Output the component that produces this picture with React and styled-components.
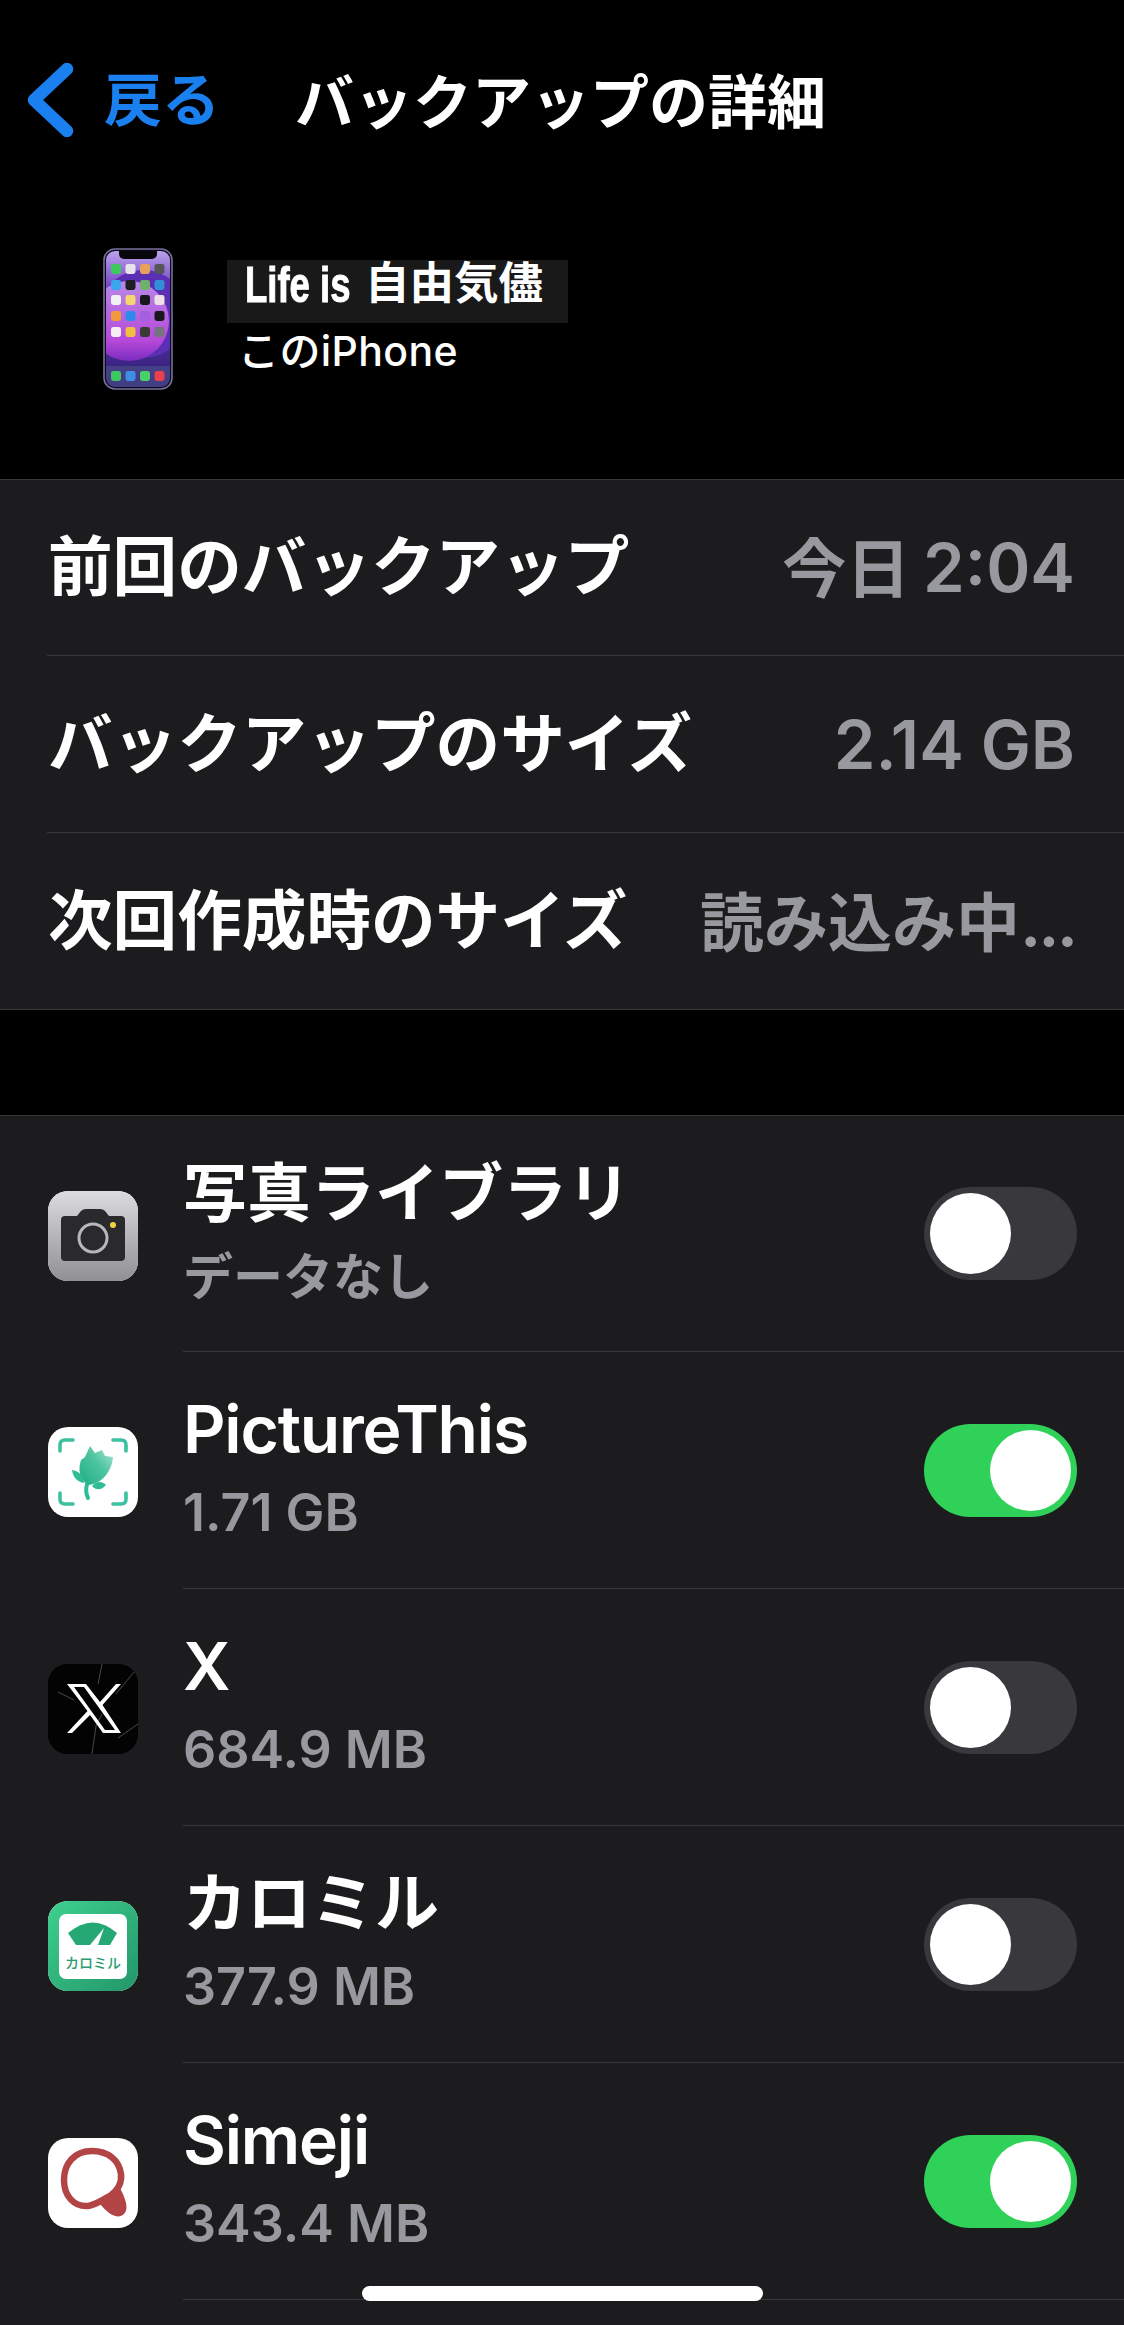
import styled, { createGlobalStyle } from "styled-components";

const GlobalStyle = createGlobalStyle`
  html, body {
    margin: 0;
    padding: 0;
    background: #000;
  }
  * {
    box-sizing: border-box;
  }
`;

const Page = styled.div`
  position: relative;
  width: 1124px;
  height: 2325px;
  overflow: hidden;
  display: flex;
  flex-direction: column;
  background: #000;
  color: #fff;
  font-family: Inter, "Noto Sans CJK JP", sans-serif;
`;

const Header = styled.header`
  height: 200px;
  display: flex;
  align-items: center;
  padding-left: 27px;
`;

const BackLink = styled.div`
  display: flex;
  align-items: center;
  width: 268px;
  gap: 30px;
  color: #1a80f0;
  font-size: 58px;
  font-weight: 600;
  line-height: 1;
`;

const Title = styled.h1`
  margin: 5px 0 0;
  font-size: 59px;
  font-weight: 700;
  line-height: 1;
`;

const Device = styled.div`
  height: 279px;
  display: flex;
  padding: 48px 0 0 103px;
  gap: 54px;
`;

const DeviceText = styled.div`
  display: flex;
  flex-direction: column;
  align-items: flex-start;
  padding-top: 12px;
`;

const DeviceName = styled.div`
  display: flex;
  width: 341px;
  height: 63px;
  padding-left: 18px;
  background: #19191a;
  font-size: 44.5px;
  font-weight: 700;
  line-height: 46px;
  white-space: nowrap;
`;

const DeviceNameLatin = styled.span`
  display: inline-block;
  width: 120px;
  font-family: "Liberation Sans", sans-serif;
  font-size: 50px;
  line-height: 50px;
  -webkit-text-stroke: 1px #fff;
  transform: scaleX(0.73);
  transform-origin: left center;
`;

const DeviceKind = styled.div`
  margin-top: 3px;
  padding-left: 11px;
  font-size: 41px;
  font-weight: 500;
  line-height: 50px;
  letter-spacing: 0.4px;
`;

const Section = styled.section`
  background: #1c1c1e;
  border-top: 1px solid #38383a;
  border-bottom: 1px solid #38383a;
`;

const AppSection = styled(Section)`
  flex: 1;
  margin-top: 105px;
  border-bottom: none;
`;

const InfoRow = styled.div`
  height: 177px;
  margin-left: 47px;
  padding-left: 1px;
  padding-right: 49px;
  display: flex;
  align-items: center;
  justify-content: space-between;
  border-bottom: 1px solid #38383a;
  font-size: 64.6px;
  font-weight: 600;
  line-height: 1;

  &:first-child {
    height: 176px;
  }

  &:last-child {
    height: 176px;
    border-bottom: none;
  }
`;

const InfoValue = styled.span`
  color: #98989f;
  font-size: 67px;
`;

const Cjk = styled.span`
  font-size: 64px;
`;

const TimeDate = styled(Cjk)`
  margin-right: -4px;
`;

const Dots = styled.span`
  letter-spacing: -3px;
`;

const AppRow = styled.div`
  height: 237px;
  display: flex;
  align-items: center;
  padding-left: 48px;

  &:first-child {
    height: 236px;
  }
`;

const IconSlot = styled.div`
  width: 90px;
  height: 90px;
  flex: none;
  margin-top: 3px;
  border-radius: 20px;
  overflow: hidden;
  background: ${(props) => props.$bg || "#fff"};

  svg {
    display: block;
    width: 90px;
    height: 90px;
  }
`;

const AppBody = styled.div`
  flex: 1;
  height: 100%;
  margin-left: 45px;
  padding-right: 47px;
  display: flex;
  align-items: center;
  justify-content: space-between;
  border-bottom: 1px solid #38383a;
`;

const AppText = styled.div`
  display: flex;
  flex-direction: column;
  padding-bottom: 5px;
`;

const AppName = styled.div`
  font-size: ${(props) => (props.$cjk ? "64px" : "66px")};
  font-weight: 600;
  line-height: 80px;
  letter-spacing: ${(props) => (props.$cjk ? "0" : "-1.2px")};
`;

const AppSize = styled.div`
  margin-top: 11px;
  color: #98989f;
  font-size: ${(props) => (props.$cjk ? "50px" : "52px")};
  font-weight: 600;
  line-height: 66px;
`;

const Toggle = styled.div`
  width: 153px;
  height: 93px;
  flex: none;
  padding: 6px;
  display: flex;
  justify-content: ${(props) => (props.$on ? "flex-end" : "flex-start")};
  border-radius: 47px;
  background: ${(props) => (props.$on ? "#30d158" : "#39393d")};
`;

const Knob = styled.span`
  width: 81px;
  height: 81px;
  border-radius: 50%;
  background: #fff;
`;

const HomeIndicator = styled.div`
  position: absolute;
  left: 362px;
  top: 2286px;
  width: 401px;
  height: 15px;
  border-radius: 8px;
  background: #fff;
`;

const PhoneSvg = styled.svg`
  filter: blur(0.4px);
`;

const BackChevron = () => (
  <svg width="47" height="74" viewBox="0 0 47 74" fill="none">
    <path
      d="M40 6 L7 37 L40 68"
      stroke="#1a80f0"
      strokeWidth="12.5"
      strokeLinecap="round"
      strokeLinejoin="round"
    />
  </svg>
);

const HOME_APPS = [
  ["#3ec95f", "#e8e4ea", "#e9a05c", "#55555a"],
  ["#3aa6ee", "#1d1d22", "#6fb06a", "#2f8fd8"],
  ["#f4f1f6", "#f4d66e", "#17171c", "#f0dfe4"],
  ["#f09a3c", "#2b8cee", "#a35fe0", "#17171c"],
  ["#f6eef2", "#f2c040", "#3a3a34", "#74747c"],
];

const DOCK_APPS = ["#3ec95f", "#3f8ee6", "#4ccf68", "#e8404f"];
const COLS = [13, 27.5, 42, 56.5];
const ROWS = [21, 37, 52, 68, 84];

const PhoneThumb = () => (
  <PhoneSvg width="70" height="142" viewBox="0 0 70 142">
    <defs>
      <linearGradient id="wall" x1="0" y1="0" x2="0" y2="1">
        <stop offset="0" stopColor="#b9a2ea" />
        <stop offset="0.25" stopColor="#7a48c8" />
        <stop offset="1" stopColor="#2b1a70" />
      </linearGradient>
      <linearGradient id="disc" x1="0" y1="0" x2="0" y2="1">
        <stop offset="0" stopColor="#b78ae8" />
        <stop offset="0.75" stopColor="#b648d8" />
        <stop offset="1" stopColor="#7a2cc0" />
      </linearGradient>
      <clipPath id="screen">
        <rect x="3" y="3" width="64" height="136" rx="9" />
      </clipPath>
    </defs>
    <rect x="1" y="1" width="68" height="140" rx="11" fill="#0c0a18" stroke="#77709c" strokeWidth="1.6" />
    <g clipPath="url(#screen)">
      <rect x="3" y="3" width="64" height="136" fill="url(#wall)" />
      <circle cx="40" cy="66" r="44" fill="#5a2fb4" />
      <circle cx="26" cy="73" r="40" fill="url(#disc)" />
      <rect x="3" y="118" width="64" height="21" fill="#4a4a88" opacity="0.75" />
      <path d="M16 3 h38 v3 a5 5 0 0 1 -5 5 h-28 a5 5 0 0 1 -5 -5 z" fill="#07070c" />
    </g>
    {HOME_APPS.map((row, r) =>
      row.map((color, c) => (
        <rect key={`${r}-${c}`} x={COLS[c] - 5} y={ROWS[r] - 5} width="10" height="10" rx="2.4" fill={color} />
      ))
    )}
    {DOCK_APPS.map((color, c) => (
      <rect key={color + c} x={COLS[c] - 5} y="123" width="10" height="10" rx="2.4" fill={color} />
    ))}
  </PhoneSvg>
);

const CameraIcon = () => (
  <svg viewBox="0 0 90 90">
    <defs>
      <linearGradient id="cam" x1="0" y1="0" x2="0" y2="1">
        <stop offset="0" stopColor="#dcdce0" />
        <stop offset="1" stopColor="#8f8f94" />
      </linearGradient>
    </defs>
    <rect width="90" height="90" fill="url(#cam)" />
    <path
      d="M17 25 h12 l4 -5 q2 -2 5 -2 h14 q3 0 5 2 l4 5 h12 q4 0 4 4 v37 q0 4 -4 4 h-56 q-4 0 -4 -4 v-37 q0 -4 4 -4 z"
      fill="#2a2a2d"
    />
    <circle cx="45" cy="47" r="14" fill="none" stroke="#b8b8bc" strokeWidth="3" />
    <circle cx="65" cy="34" r="3" fill="#f4d23e" />
  </svg>
);

const PictureThisIcon = () => (
  <svg viewBox="0 0 90 90">
    <defs>
      <linearGradient id="petal" x1="0" y1="1" x2="1" y2="0">
        <stop offset="0" stopColor="#1fae84" />
        <stop offset="0.55" stopColor="#4cc49f" />
        <stop offset="1" stopColor="#b4e8d6" />
      </linearGradient>
    </defs>
    <g fill="none" stroke="#3cc0a0" strokeWidth="3.6" strokeLinecap="round" strokeLinejoin="round">
      <path d="M12 24 v-6 q0 -5 5 -5 h8" />
      <path d="M65 13 h8 q5 0 5 5 v6" />
      <path d="M12 66 v6 q0 5 5 5 h8" />
      <path d="M65 77 h8 q5 0 5 -5 v-6" />
    </g>
    <path d="M39 57 q-2 8 1 14" fill="none" stroke="#2fbd98" strokeWidth="4" strokeLinecap="round" />
    <path d="M40 58 C31 52 30 42 33 33 L37 30 L42 19 L47 26 L54 23 L57 29 L65 30 C64 44 54 57 40 58 Z" fill="url(#petal)" />
    <path d="M36 56 C29 55 25 50 24 43 C31 44 36 49 36 56 Z" fill="#2fbd98" />
    <path d="M44 59 C48 54 54 54 58 58 C54 63 48 64 44 59 Z" fill="#2fbd98" />
  </svg>
);

const XIcon = () => (
  <svg viewBox="0 0 90 90">
    <rect width="90" height="90" fill="#030303" />
    <g stroke="#5c5c5c" strokeWidth="0.8" fill="none">
      <path d="M54 0 L50 20" />
      <path d="M44 90 L48 62 L54 50" />
      <path d="M10 28 L26 36" />
      <path d="M70 74 L90 60" />
      <path d="M68 30 L86 8" />
    </g>
    <path
      fillRule="evenodd"
      fill="#fff"
      d="M19 20 H38 L52 38 L68 20 H73 L54.5 41 L73 69 H55 L42 51 L24 69 H19 L39.5 47 Z M26 23 L57 66 H67 L36 23 Z"
    />
  </svg>
);

const CaloryIcon = () => (
  <svg viewBox="0 0 90 90">
    <defs>
      <linearGradient id="calo" x1="0" y1="0" x2="1" y2="1">
        <stop offset="0" stopColor="#3ed08f" />
        <stop offset="1" stopColor="#23966a" />
      </linearGradient>
    </defs>
    <rect width="90" height="90" fill="url(#calo)" />
    <rect x="11" y="13" width="68" height="65" rx="7" fill="#fff" />
    <path d="M20 32 Q45 11 69 32 L62 44 H28 Z" fill="#25a873" />
    <path d="M42 44 L56 27 L50 44 Z" fill="#fff" />
    <text
      x="45"
      y="67"
      textAnchor="middle"
      fontFamily="'Noto Sans CJK JP', sans-serif"
      fontSize="14"
      fontWeight="500"
      fill="#2a9a70"
    >
      カロミル
    </text>
  </svg>
);

const SimejiIcon = () => (
  <svg viewBox="0 0 90 90">
    <path
      d="M44 13 C26 13 16 26 16 42 C16 58 26 69 40 68 C48 67 54 62 62 58 C70 52 74 44 73 36 C71 22 60 13 44 13 Z"
      fill="none"
      stroke="#b24446"
      strokeWidth="6.5"
      strokeLinejoin="round"
    />
    <path d="M56 60 C62 57 68 54 72 50 C76 58 82 70 76 76 C70 82 60 76 52 66 Z" fill="#b24446" />
  </svg>
);

const INFO = [
  { label: "前回のバックアップ", value: <><TimeDate>今日</TimeDate> 2:04</> },
  { label: "バックアップのサイズ", value: "2.14 GB" },
  { label: "次回作成時のサイズ", value: <><Cjk>読み込み中</Cjk><Dots>...</Dots></> },
];

const APPS = [
  { name: "写真ライブラリ", cjk: true, size: "データなし", sizeCjk: true, icon: <CameraIcon />, on: false },
  { name: "PictureThis", size: "1.71 GB", icon: <PictureThisIcon />, on: true },
  { name: "X", size: "684.9 MB", icon: <XIcon />, on: false, bg: "#030303" },
  { name: "カロミル", cjk: true, size: "377.9 MB", icon: <CaloryIcon />, on: false },
  { name: "Simeji", size: "343.4 MB", icon: <SimejiIcon />, on: true },
];

const App = () => {
  return (
    <Page>
      <GlobalStyle />
      <Header>
        <BackLink>
          <BackChevron />
          戻る
        </BackLink>
        <Title>バックアップの詳細</Title>
      </Header>
      <Device>
        <PhoneThumb />
        <DeviceText>
          <DeviceName>
            <DeviceNameLatin>Life is</DeviceNameLatin>
            自由気儘
          </DeviceName>
          <DeviceKind>このiPhone</DeviceKind>
        </DeviceText>
      </Device>
      <Section>
        {INFO.map((row) => (
          <InfoRow key={row.label}>
            {row.label}
            <InfoValue>{row.value}</InfoValue>
          </InfoRow>
        ))}
      </Section>
      <AppSection>
        {APPS.map((app) => (
          <AppRow key={app.name}>
            <IconSlot $bg={app.bg}>{app.icon}</IconSlot>
            <AppBody>
              <AppText>
                <AppName $cjk={app.cjk}>{app.name}</AppName>
                <AppSize $cjk={app.sizeCjk}>{app.size}</AppSize>
              </AppText>
              <Toggle $on={app.on}>
                <Knob />
              </Toggle>
            </AppBody>
          </AppRow>
        ))}
      </AppSection>
      <HomeIndicator />
    </Page>
  );
};

export default App;
